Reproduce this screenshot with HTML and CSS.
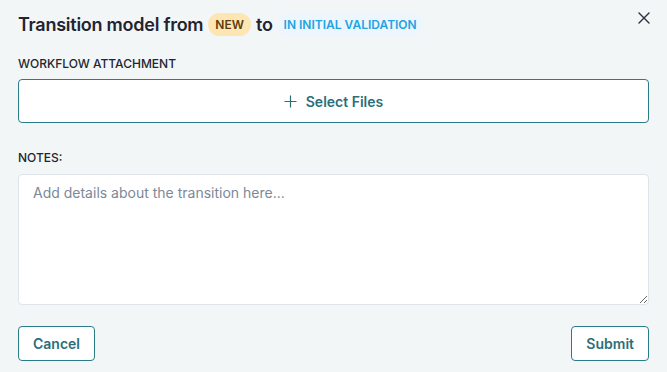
FILE: index.html
```html
<!DOCTYPE html>
<html lang="en">
<head>
  <meta charset="UTF-8" />
  <title>Transition model</title>
  <link rel="stylesheet" href="styles.css">
</head>
<body>
  <div class="dialog">
    <!-- Header -->
    <div class="dialog-header">
      <h2 class="dialog-title">
        Transition model from
        <span class="badge badge-new">NEW</span>
        to
        <span class="badge badge-status">IN INITIAL VALIDATION</span>
      </h2>
      <button class="close-btn" aria-label="Close">
        <svg width="12" height="12" viewBox="0 0 12 12"><path d="M1 1L11 11M11 1L1 11" stroke="#2b2f3a" stroke-width="1.4" stroke-linecap="round"/></svg>
      </button>
    </div>

    <!-- Attachment -->
    <label class="field-label">WORKFLOW ATTACHMENT</label>
    <button class="select-files">
      <svg width="13" height="13" viewBox="0 0 13 13"><path d="M6.5 0.5V12.5M0.5 6.5H12.5" stroke="#2b7079" stroke-width="1.2"/></svg>
      Select Files
    </button>

    <!-- Notes -->
    <label class="field-label notes-label">NOTES:</label>
    <textarea class="notes" placeholder="Add details about the transition here..."></textarea>

    <!-- Footer -->
    <div class="dialog-footer">
      <button class="btn">Cancel</button>
      <button class="btn">Submit</button>
    </div>
  </div>
</body>
</html>
```

FILE: styles.css
```css
/* General */
body {
  margin: 0;
  background: #f3f6f7;
  font-family: Inter, "Noto Sans", sans-serif;
  color: #1f2430;
}

.dialog {
  padding: 12px 18px 12px 18px;
  display: flex;
  flex-direction: column;
}

/* Header */
.dialog-header {
  display: flex;
  justify-content: space-between;
  align-items: center;
  height: 25px;
  margin-bottom: 19px;
}

.dialog-title {
  margin: 0;
  font-size: 18px;
  font-weight: 600;
  letter-spacing: -0.25px;
  display: flex;
  align-items: center;
  gap: 5px;
}

.badge {
  font-size: 12px;
  font-weight: 600;
  padding: 0 7px;
  height: 23px;
  line-height: 23px;
  border-radius: 12px;
  letter-spacing: 0;
}

.badge-new {
  background: #fde6b4;
  color: #5c3d0c;
}

.badge-status {
  margin-left: -1px;
  background: #eef6fd;
  color: #22a3e3;
}

.close-btn {
  align-self: flex-start;
  border: 0;
  background: none;
  padding: 0;
  margin-right: -1px;
  display: flex;
  cursor: pointer;
}

/* Fields */
.field-label {
  font-size: 12px;
  font-weight: 500;
  color: #22262f;
  margin-bottom: 8px;
}

.select-files {
  height: 44px;
  background: #fff;
  border: 1px solid #2a7c86;
  border-radius: 4px;
  display: flex;
  align-items: center;
  justify-content: center;
  gap: 9px;
  font-family: inherit;
  font-size: 14px;
  font-weight: 600;
  color: #2b6f78;
  cursor: pointer;
}

.notes-label {
  margin-top: 27px;
  margin-bottom: 9px;
}

.notes {
  height: 131px;
  box-sizing: border-box;
  background: #fff;
  border: 1px solid #dde4ea;
  border-radius: 4px;
  padding: 9px 14px;
  font-family: inherit;
  font-size: 14px;
  color: #1f2430;
  resize: vertical;
}

.notes::placeholder {
  color: #7d8899;
}

/* Footer */
.dialog-footer {
  display: flex;
  justify-content: space-between;
  margin-top: 21px;
}

.btn {
  height: 35px;
  padding: 0 14px;
  background: #fff;
  border: 1px solid #2a7c86;
  border-radius: 4px;
  font-family: inherit;
  font-size: 14px;
  font-weight: 600;
  color: #2b6f78;
  cursor: pointer;
}
```
